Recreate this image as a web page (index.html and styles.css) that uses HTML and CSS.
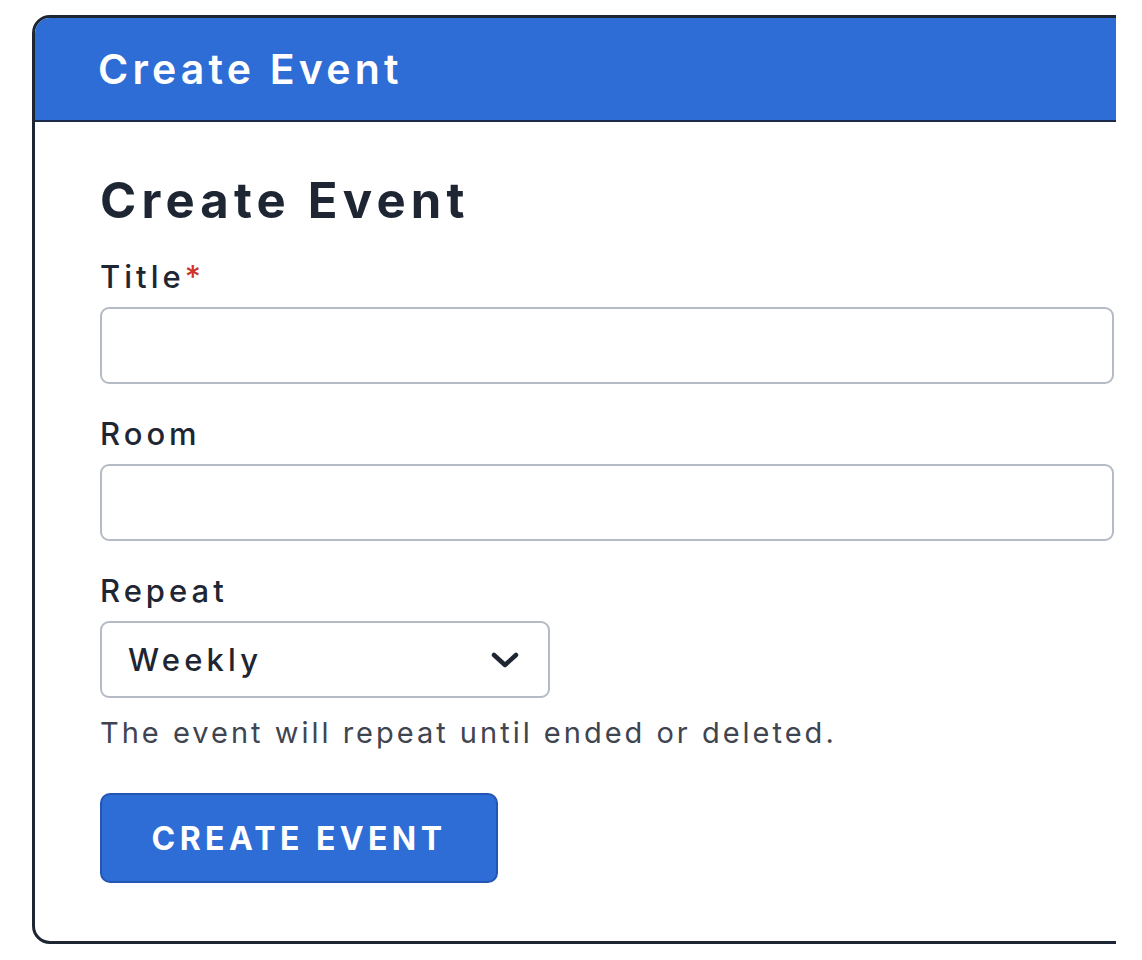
FILE: index.html
```html
<!DOCTYPE html>
<html lang="en">
<head>
<meta charset="utf-8">
<title>Create Event</title>
<link rel="stylesheet" href="styles.css">
</head>
<body>
<div class="viewport-clip">
  <section class="card">
    <header class="card-header">
      <span class="card-header-title">Create Event</span>
    </header>
    <form class="card-body">
      <h1 class="form-title">Create Event</h1>
      <div class="field">
        <label class="field-label" for="title">Title<span class="required">*</span></label>
        <input class="text-input" id="title" type="text">
      </div>
      <div class="field">
        <label class="field-label" for="room">Room</label>
        <input class="text-input" id="room" type="text">
      </div>
      <div class="field field-repeat">
        <label class="field-label" for="repeat">Repeat</label>
        <div class="select">
          <span class="select-value">Weekly</span>
          <svg class="select-chevron" width="30" height="18" viewBox="0 0 30 18" aria-hidden="true">
            <path d="M4 4 L15 14 L26 4" fill="none" stroke="#1f2633" stroke-width="4.5" stroke-linecap="round" stroke-linejoin="round"/>
          </svg>
        </div>
        <p class="help-text">The event will repeat until ended or deleted.</p>
      </div>
      <button class="primary-button" type="button">CREATE EVENT</button>
    </form>
  </section>
</div>
</body>
</html>
```

FILE: styles.css
```css
* {
  box-sizing: border-box;
}

html, body {
  margin: 0;
  padding: 0;
  background: #ffffff;
}

body {
  font-family: "Inter", "Liberation Sans", sans-serif;
  color: #1f2633;
  padding: 15px 0 0 32px;
}

.viewport-clip {
  width: 1084px;
  overflow: hidden;
  padding-bottom: 12px;
}

.card {
  width: 1140px;
  border: 3px solid #1e2533;
  border-radius: 18px;
  overflow: hidden;
  background: #ffffff;
}

.card-header {
  height: 104px;
  background: #2e6dd6;
  border-bottom: 2px solid #1b2b49;
  display: flex;
  align-items: center;
  padding-left: 63px;
}

.card-header-title {
  color: #ffffff;
  font-size: 41px;
  font-weight: 600;
  letter-spacing: 4.2px;
}

.card-body {
  padding: 51px 0 58px 65px;
  display: flex;
  flex-direction: column;
  align-items: flex-start;
}

.form-title {
  margin: 0;
  font-size: 49px;
  line-height: 56px;
  font-weight: 700;
  letter-spacing: 5.2px;
  color: #1e2533;
}

.field {
  display: flex;
  flex-direction: column;
  align-items: flex-start;
  width: 1014px;
  margin-top: 30px;
}

.field + .field {
  margin-top: 32px;
}

.field-label {
  font-size: 31px;
  line-height: 36px;
  font-weight: 500;
  letter-spacing: 4px;
  color: #1f2633;
  margin-bottom: 12px;
}

.required {
  color: #d0332b;
  margin-left: 0;
}

.text-input {
  width: 1014px;
  height: 77px;
  border: 2px solid #b5bbc4;
  border-radius: 9px;
  background: #ffffff;
  font: inherit;
  outline: none;
}

.select {
  width: 450px;
  height: 77px;
  border: 2px solid #b5bbc4;
  border-radius: 9px;
  display: flex;
  align-items: center;
  justify-content: space-between;
  padding: 0 28px 0 26px;
}

.select-value {
  font-size: 31px;
  font-weight: 500;
  letter-spacing: 4.2px;
  color: #1f2633;
}

.select-chevron {
  display: block;
}

.help-text {
  margin: 18px 0 0;
  font-size: 29px;
  line-height: 34px;
  letter-spacing: 3px;
  color: #3f4550;
}

.primary-button {
  margin-top: 43px;
  width: 398px;
  height: 90px;
  background: #2e6dd6;
  border: 2px solid #2356b3;
  border-radius: 10px;
  color: #ffffff;
  font-family: inherit;
  font-size: 32px;
  font-weight: 700;
  letter-spacing: 4.4px;
  cursor: pointer;
}
```
